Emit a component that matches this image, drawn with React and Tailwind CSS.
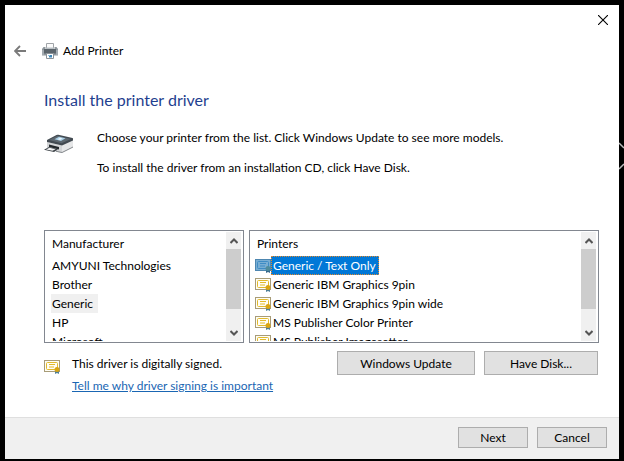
import React, { useState } from 'react';

const manufacturers = ['AMYUNI Technologies', 'Brother', 'Generic', 'HP', 'Microsoft'];

const printers = [
    'Generic / Text Only',
    'Generic IBM Graphics 9pin',
    'Generic IBM Graphics 9pin wide',
    'MS Publisher Color Printer',
    'MS Publisher Imagesetter'
];

function BackIcon() {
    return (
        <svg className="w-3 h-3" viewBox="0 0 12 12" fill="none" stroke="#7a7a7a" strokeWidth="1.8">
            <path d="M12 6H1M6 1L1 6l5 5" />
        </svg>
    );
}

function CloseIcon() {
    return (
        <svg className="w-[10px] h-[10px]" viewBox="0 0 10 10" fill="none" stroke="#000" strokeWidth="1.1">
            <path d="M0 0l10 10M10 0L0 10" />
        </svg>
    );
}

function SmallPrinterIcon() {
    return (
        <svg className="w-4 h-4" viewBox="0 0 16 16">
            <path d="M4.500 6V.5h7V6" fill="#fbfbfb" stroke="#a0a4a8" />
            <path d="M1.500 4h2v2h9V4h2L16 6v6.500H0V6z" fill="#8f979d" />
            <path d="M2 6h12v4.500H2z" fill="#5b646b" />
            <path d="M4 4.500h8V6H4z" fill="#b9bfc3" />
            <path d="M0 7h2v5H0zM14 7h2v5h-2z" fill="#a3aab0" />
            <path d="M4.500 10.500h7v5h-7z" fill="#fff" stroke="#8c9298" />
            <path d="M7 12h3v2.500H7z" fill="#3e86b8" />
            <path d="M6 12h2v1H6z" fill="#8cc0dc" />
        </svg>
    );
}

function PrinterIcon() {
    return (
        <svg className="w-[30px] h-5" viewBox="0 0 30 20">
            <path d="M3 8l15 3.500V19L3 15.500z" fill="#d3d5d7" />
            <path d="M18 11.500L29 6v7.500L18 19z" fill="#e6e7e8" />
            <path d="M18 18l11-5.500v1L18 19l-6-1.300v-1z" fill="#85898d" />
            <path d="M3 6L12.500 1q.8-.4 1.800-.2L28.500 4q.8.400.5 1.500v1L18 11.500 3 8z" fill="#424a51" />
            <path d="M5 6l8.500-4.300L27 4.900 17.500 9.300z" fill="#5d676f" />
            <path d="M10.500 5.300l4.500-2.600 6.500 1.600-4.500 2.800z" fill="#a9cfe6" />
            <path d="M13.500 5.200l2.500-1.400 2.500.6-2.500 1.500z" fill="#e9f4fa" />
            <path d="M5 10.500l10 2.500v2.500L5 13z" fill="#24292d" />
            <path d="M5 13l9 2.200-4 2.800L0 15.800z" fill="#3b4146" />
            <path d="M5.500 13.700l6 1.500-3 1.600L2 15.400z" fill="#f3f4f5" />
        </svg>
    );
}

function CertificateIcon({ selected }) {
    const paper = selected ? '#79aed3' : '#fffef6';
    const edge = selected ? '#4d86b0' : '#a89c78';
    const frame = selected ? '#3f8cc4' : '#e2ba2c';
    return (
        <svg className="w-4 h-[14px] shrink-0" viewBox="0 0 16 14">
            <rect x=".5" y=".5" width="15" height="11" fill={paper} stroke={edge} />
            <rect x="2.500" y="2.500" width="11" height="7" rx="1" fill={paper} stroke={frame} />
            <path d="M5 4.500h6M5 7h5" stroke={frame} />
            <path d="M11 10h4v4l-2-1-2 1z" fill={selected ? '#35678c' : '#4e7f98'} />
            <circle cx="13" cy="9.500" r="2.500" fill={selected ? '#4f8c9c' : '#d9a514'} />
        </svg>
    );
}

function ScrollBar({ label }) {
    return (
        <div className="flex w-[15px] shrink-0 flex-col bg-[#f0f0f0]">
            <button aria-label={`Scroll ${label} up`} className="flex h-[17px] items-center justify-center">
                <svg className="w-2 h-[6px]" viewBox="0 0 8 6" fill="none" stroke="#555" strokeWidth="2">
                    <path d="M.5 5L4 1.500 7.500 5" />
                </svg>
            </button>
            <div className="flex-1">
                <div className="h-4/5 bg-[#cdcdcd]"></div>
            </div>
            <button aria-label={`Scroll ${label} down`} className="flex h-[17px] items-center justify-center">
                <svg className="w-2 h-[6px]" viewBox="0 0 8 6" fill="none" stroke="#555" strokeWidth="2">
                    <path d="M.5 1L4 4.500 7.500 1" />
                </svg>
            </button>
        </div>
    );
}

function DialogButton({ className, children }) {
    return (
        <button className={`border border-[#adadad] bg-[#e1e1e1] hover:bg-[#e5f1fb] ${className}`}>
            {children}
        </button>
    );
}

export default function App() {
    const [manufacturer, setManufacturer] = useState('Generic');
    const [printer, setPrinter] = useState('Generic / Text Only');

    return (
        <div className="relative flex min-h-screen flex-col bg-black px-[5px] pt-[5px] pb-[2px] font-[Lato,sans-serif] text-[12px] leading-[19px] text-black">
            <svg className="absolute right-0 top-[142px] h-7 w-[5px]" viewBox="0 0 5 28" fill="none" stroke="#bbb" strokeWidth="1.500">
                <path d="M0 1l5 5M0 27l5-5" />
            </svg>

            <div className="flex flex-1 flex-col bg-white">
                {/* Title bar */}
                <div className="flex justify-end pt-[10px] pr-[11px]">
                    <button aria-label="Close"><CloseIcon /></button>
                </div>
                <header className="mt-4 flex items-center pl-[9px]">
                    <button aria-label="Back"><BackIcon /></button>
                    <div className="ml-4 flex items-center gap-[5px]">
                        <SmallPrinterIcon />
                        <span>Add Printer</span>
                    </div>
                </header>

                <main className="flex flex-1 flex-col pt-7 pr-5 pl-[39px]">
                    <h1 className="text-[16px] leading-6 text-[#1f3f8f]">Install the printer driver</h1>

                    <div className="mt-4 flex gap-[23px]">
                        <div className="pt-[6px]"><PrinterIcon /></div>
                        <div className="space-y-[11px]">
                            <p>Choose your printer from the list. Click Windows Update to see more models.</p>
                            <p>To install the driver from an installation CD, click Have Disk.</p>
                        </div>
                    </div>

                    {/* Lists */}
                    <div className="mt-[53px] grid grid-cols-[4fr_7fr] gap-[5px]">
                        <section className="flex h-[113px] border border-[#828790] py-px pr-[2px]">
                            <div className="min-w-0 flex-1 overflow-hidden pl-[6px]">
                                <h2 id="manufacturers" className="pt-[2px] pb-[3px] pl-px">Manufacturer</h2>
                                <ul aria-labelledby="manufacturers">
                                    {manufacturers.map((name) => (
                                        <li key={name} className="flex">
                                            <button
                                                aria-pressed={manufacturer === name}
                                                onClick={() => setManufacturer(name)}
                                                className={`pr-[5px] pl-px whitespace-nowrap ${manufacturer === name ? 'bg-[#f0f0f0]' : ''}`}
                                            >
                                                {name}
                                            </button>
                                        </li>
                                    ))}
                                </ul>
                            </div>
                            <ScrollBar label="manufacturers" />
                        </section>

                        <section className="flex h-[113px] border border-[#828790] py-px pr-[2px]">
                            <div className="min-w-0 flex-1 overflow-hidden pl-[5px]">
                                <h2 id="printers" className="pt-[2px] pb-[3px] pl-[2px]">Printers</h2>
                                <ul aria-labelledby="printers">
                                    {printers.map((name) => (
                                        <li key={name} className="flex">
                                            <button
                                                aria-pressed={printer === name}
                                                onClick={() => setPrinter(name)}
                                                className="flex items-center whitespace-nowrap"
                                            >
                                                <CertificateIcon selected={printer === name} />
                                                <span
                                                    className={`pr-[3px] pl-[2px] ${
                                                        printer === name
                                                            ? 'bg-[#0078d7] text-white outline-1 -outline-offset-1 outline-dotted outline-[#e08a30]'
                                                            : ''
                                                    }`}
                                                >
                                                    {name}
                                                </span>
                                            </button>
                                        </li>
                                    ))}
                                </ul>
                            </div>
                            <ScrollBar label="printers" />
                        </section>
                    </div>

                    {/* Signature status and actions */}
                    <div className="mt-2 flex items-start justify-between pr-px">
                        <div className="flex gap-3">
                            <div className="pt-[9px]"><CertificateIcon /></div>
                            <div className="space-y-[3px] pt-[3px]">
                                <p>This driver is digitally signed.</p>
                                <p>
                                    <a href="#signing" className="text-[#1a66b3] underline">
                                        Tell me why driver signing is important
                                    </a>
                                </p>
                            </div>
                        </div>
                        <div className="flex gap-[9px]">
                            <DialogButton className="h-6 w-[138px]">Windows Update</DialogButton>
                            <DialogButton className="h-6 w-[114px]">Have Disk...</DialogButton>
                        </div>
                    </div>
                </main>

                <footer className="flex h-[42px] items-start justify-end gap-[9px] border-t border-[#dfdfdf] bg-[#f0f0f0] pt-[9px] pr-3">
                    <DialogButton className="h-[21px] w-[70px] leading-none">Next</DialogButton>
                    <DialogButton className="h-[21px] w-[70px] leading-none">Cancel</DialogButton>
                </footer>
            </div>
        </div>
    );
}
